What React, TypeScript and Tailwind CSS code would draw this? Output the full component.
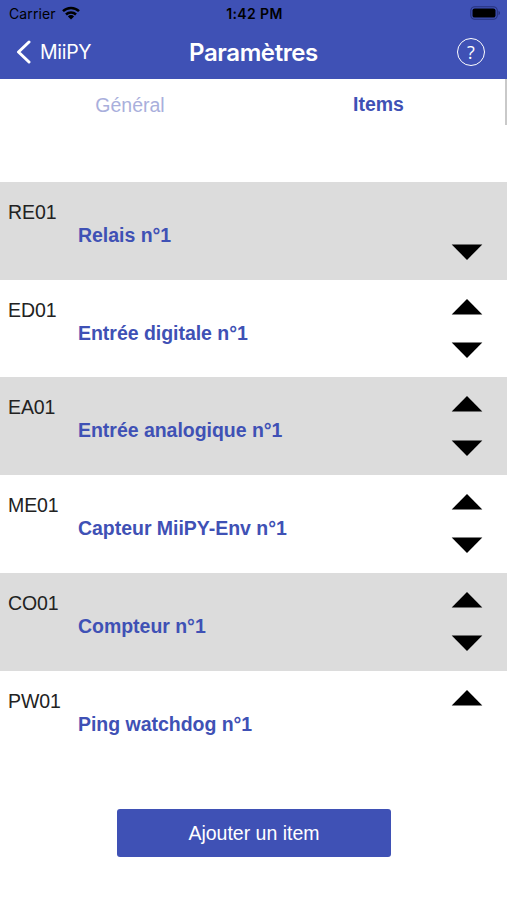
interface Item {
  code: string;
  nom: string;
}

const items: Item[] = [
  { code: 'RE01', nom: 'Relais n°1' },
  { code: 'ED01', nom: 'Entrée digitale n°1' },
  { code: 'EA01', nom: 'Entrée analogique n°1' },
  { code: 'ME01', nom: 'Capteur MiiPY-Env n°1' },
  { code: 'CO01', nom: 'Compteur n°1' },
  { code: 'PW01', nom: 'Ping watchdog n°1' },
];

function BarreStatut() {
  return (
    <div className="h-7 pl-[9px] pr-[7px] grid grid-cols-3 items-center text-black text-[14px] leading-none">
      <div className="flex items-center gap-[6px]">
        <span className="tracking-[0.1px]">Carrier</span>
        <svg className="-mt-[2px]" width="18" height="14" viewBox="0 0 18 14" fill="none" stroke="currentColor" strokeWidth="2.5">
          <path d="M1 5.2a11.4 11.4 0 0 1 16 0" />
          <path d="M4 8.5a7.1 7.1 0 0 1 10 0" />
          <path d="M9 13.5 5.9 10.4a4.4 4.4 0 0 1 6.2 0z" fill="currentColor" stroke="none" />
        </svg>
      </div>
      <span className="text-center font-semibold tracking-[0.4px] whitespace-nowrap">1:42 PM</span>
      <svg className="justify-self-end -mt-[2px]" width="30" height="14" viewBox="0 0 30 14">
        <rect x="0.8" y="0.7" width="26.5" height="12.6" rx="4" fill="none" stroke="#27327d" strokeWidth="1.1" />
        <rect x="2.5" y="2.4" width="23" height="9.2" rx="2.2" />
        <path d="M28.5 4.8c2 .8 2 3.6 0 4.4z" fill="#27327d" />
      </svg>
    </div>
  );
}

function EnTete() {
  return (
    <header className="h-[79px] bg-[#3f51b5] font-[Inter,sans-serif]">
      <BarreStatut />
      <div className="h-[48px] px-4 grid grid-cols-[1fr_auto_1fr] items-center text-white">
        <button className="flex items-center gap-2 text-[19.5px] tracking-[-0.3px] leading-none">
          <svg width="16" height="24" viewBox="0 0 16 24" fill="none" stroke="currentColor" strokeWidth="3" strokeLinecap="round" strokeLinejoin="round">
            <path d="M13 2 2.5 12 13 22" />
          </svg>
          <span className="pt-[2px]">MiiPY</span>
        </button>
        <h1 className="pt-px text-[24px] font-semibold tracking-[-0.4px] leading-none">Paramètres</h1>
        <button className="justify-self-end mr-[6px] w-[28px] h-[28px] rounded-full border-[1.5px] border-white flex items-center justify-center font-['Open_Sans',sans-serif] text-[18px] leading-none">
          ?
        </button>
      </div>
    </header>
  );
}

function Fleche({ sens }: { sens: 'haut' | 'bas' }) {
  return (
    <svg width="32" height="16" viewBox="0 0 32 16">
      <path d={sens === 'haut' ? 'M16 0 31.3 15.6H.7z' : 'M.7.4h30.6L16 16z'} />
    </svg>
  );
}

export default function App() {
  return (
    <div className="h-[900px] w-[507px] bg-white overflow-hidden font-['Liberation_Sans',Arial,sans-serif] text-[19.5px]">
      <EnTete />

      <nav className="relative h-[102.9px] grid grid-cols-2 items-start leading-[22px] pl-1 pr-[3px]">
        <button className="pt-[15px] pl-[2px] text-[#a9afdc]">Général</button>
        <button className="pt-[14px] pr-px font-bold text-[#3f51b5]">Items</button>
        <div className="absolute right-0 top-0 w-[2px] h-[46px] bg-[#c9c9c9]" />
      </nav>

      <ul>
        {items.map((item, i) => (
          <li
            key={item.code}
            className="h-[97.75px] pl-[8px] pr-[24px] flex odd:bg-[#dcdcdc]"
          >
            <span className="w-[70px] pt-[19px] leading-[22px] tracking-[-0.1px] text-[#222]">{item.code}</span>
            <span className="flex-1 pt-[42px] leading-[22px] tracking-[-0.03px] font-bold text-[#3f51b5]">{item.nom}</span>
            <div className="flex flex-col justify-between pt-[19px] pb-[19.5px]">
              {i > 0 ? <Fleche sens="haut" /> : <span />}
              {i < items.length - 1 && <Fleche sens="bas" />}
            </div>
          </li>
        ))}
      </ul>

      <button className="block mt-[40.6px] ml-[117px] w-[274px] h-[48px] pt-px rounded-[3px] bg-[#3f51b5] text-white">
        Ajouter un item
      </button>
    </div>
  );
}
